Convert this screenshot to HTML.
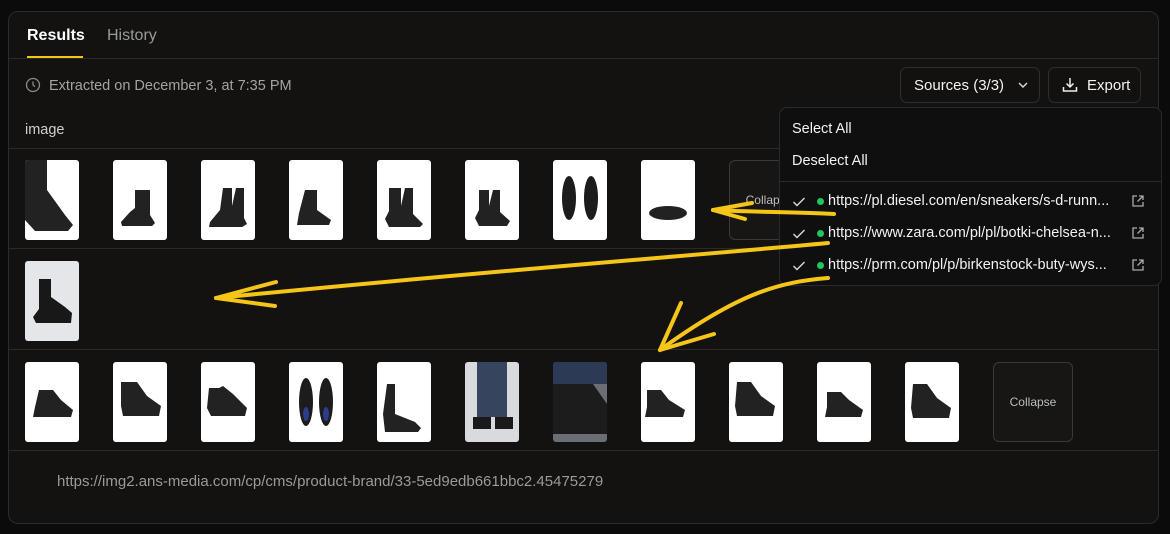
<!DOCTYPE html>
<html><head><meta charset="utf-8"><style>
*{box-sizing:border-box;margin:0;padding:0}
body{width:1170px;height:534px;background:#0b0b0b;font-family:"Liberation Sans",sans-serif;position:relative;overflow:hidden;color:#e8e8e8}
.panel{position:absolute;left:8px;top:11px;width:1151px;height:513px;background:#131211;border:1px solid #2c2b2a;border-radius:10px}
.abs{position:absolute}
.hl{position:absolute;left:9px;width:1149px;height:1px;background:#2a2928}
.th{position:absolute;width:54px;height:80px;background:#fff;border-radius:3px;overflow:hidden}
.coll{position:absolute;width:80px;height:80px;border:1px solid #3a3938;border-radius:6px;background:#171615;color:#bdbdbd;font-size:12px;display:flex;align-items:center;justify-content:center}
.btn{position:absolute;top:67px;height:36px;border:1px solid #2f2e2d;border-radius:7px;background:#121110;color:#f2f2f2;font-size:15px;display:flex;align-items:center}
.dd{position:absolute;left:779px;top:107px;width:383px;height:179px;background:#0f0f0f;border:1px solid #2a2a2a;border-radius:8px}
.it{position:absolute;left:12px;font-size:14.5px;color:#f2f2f2}
.url{position:absolute;left:12px;width:358px;height:20px;font-size:14.5px;color:#f2f2f2}
.dot{display:block;width:7px;height:7px;border-radius:50%;background:#22c55e;position:absolute;left:25px;top:5px}
</style></head><body>
<div class="panel"></div>
<div class="abs" style="left:27px;top:27px;font-size:16px;font-weight:bold;color:#fff">Results</div>
<div class="abs" style="left:107px;top:27px;font-size:16px;color:#9a9a9a">History</div>
<div class="abs" style="left:27px;top:56px;width:56px;height:2px;background:#f5c518"></div>
<div class="hl" style="top:58px"></div>
<svg class="abs" style="left:25px;top:77px" width="16" height="16" viewBox="0 0 16 16"><circle cx="8" cy="8" r="6.5" fill="none" stroke="#8a8a8a" stroke-width="1.3"/><path d="M8 4.5V8l2 1.6" fill="none" stroke="#8a8a8a" stroke-width="1.3"/></svg>
<div class="abs" style="left:49px;top:78px;font-size:14.5px;color:#a3a3a3">Extracted on December 3, at 7:35 PM</div>
<div class="btn" style="left:900px;width:140px;padding-left:13px">Sources (3/3)<svg style="margin-left:13px" width="12" height="8" viewBox="0 0 12 8"><path d="M2 2l4 4 4-4" fill="none" stroke="#ddd" stroke-width="1.4"/></svg></div>
<div class="btn" style="left:1048px;width:93px;padding-left:12px"><svg width="18" height="18" viewBox="0 0 18 18" style="margin-right:8px"><path d="M9 2v9M5.5 7.5L9 11l3.5-3.5M2.5 11v4h13v-4" fill="none" stroke="#eee" stroke-width="1.5"/></svg>Export</div>
<div class="abs" style="left:25px;top:122px;font-size:14.5px;color:#cfcfcf">image</div>
<div class="hl" style="top:148px"></div>
<div class="hl" style="top:248px"></div>
<div class="hl" style="top:349px"></div>
<div class="hl" style="top:450px"></div>
<!-- row1 -->
<div class="th" style="left:25px;top:160px"><svg width="54" height="80"><path d="M0 0h22v30l18 25 8 10-5 6H10L0 60z" fill="#222"/></svg></div>
<div class="th" style="left:113px;top:160px"><svg width="54" height="80"><path d="M22 30h15v25l5 8-3 3H9l-1-4 9-10 5-4z" fill="#222"/></svg></div>
<div class="th" style="left:201px;top:160px"><svg width="54" height="80"><path d="M22 28h9v18l4-18h8v30l3 6-5 3H8l1-5 10-12z" fill="#222"/></svg></div>
<div class="th" style="left:289px;top:160px"><svg width="54" height="80"><path d="M16 30h12v20l14 10-2 5H8l2-12z" fill="#222"/></svg></div>
<div class="th" style="left:377px;top:160px"><svg width="54" height="80"><path d="M12 28h12v18l4-18h8v26l10 10-3 3H12l-4-8 4-8z" fill="#222"/></svg></div>
<div class="th" style="left:465px;top:160px"><svg width="54" height="80"><path d="M14 30h10v16l4-16h7v22l10 9-3 5H14l-4-8 4-8z" fill="#222"/></svg></div>
<div class="th" style="left:553px;top:160px"><svg width="54" height="80"><ellipse cx="16" cy="38" rx="7" ry="22" fill="#1c1c1c"/><ellipse cx="38" cy="38" rx="7" ry="22" fill="#1c1c1c"/></svg></div>
<div class="th" style="left:641px;top:160px"><svg width="54" height="80"><ellipse cx="27" cy="53" rx="19" ry="7" fill="#222"/></svg></div>
<div class="coll" style="left:729px;top:160px">Collapse</div>
<!-- row2 -->
<div class="th" style="left:25px;top:261px;background:#e4e6ea"><svg width="54" height="80"><path d="M14 18h12v18l14 10 7 6-1 10H11l-3-6 6-8z" fill="#181818"/></svg></div>
<!-- row3 -->
<div class="th" style="left:25px;top:362px"><svg width="54" height="80"><path d="M14 28h14l8 10 12 10-2 7H8l2-10z" fill="#222"/></svg></div>
<div class="th" style="left:113px;top:362px"><svg width="54" height="80"><path d="M8 20h16l10 14 14 10-2 10H10l-2-10z" fill="#222"/></svg></div>
<div class="th" style="left:201px;top:362px"><svg width="54" height="80"><path d="M8 26h10l4-2 10 8 14 14-2 8H10l-4-8z" fill="#222"/></svg></div>
<div class="th" style="left:289px;top:362px"><svg width="54" height="80"><ellipse cx="17" cy="40" rx="7" ry="24" fill="#1c1c1c"/><ellipse cx="37" cy="40" rx="7" ry="24" fill="#1c1c1c"/><ellipse cx="17" cy="52" rx="3" ry="7" fill="#2a3d8a"/><ellipse cx="37" cy="52" rx="3" ry="7" fill="#2a3d8a"/></svg></div>
<div class="th" style="left:377px;top:362px"><svg width="54" height="80"><path d="M10 22h8v30l20 8 6 6-3 4H8l-2-18z" fill="#222"/></svg></div>
<div class="th" style="left:465px;top:362px;background:#d8dadd"><svg width="54" height="80"><path d="M12 0h30v55H12z" fill="#36445e"/><path d="M8 55h18v12H8zM30 55h18v12H30z" fill="#1a1a1a"/></svg></div>
<div class="th" style="left:553px;top:362px;background:#6b6e74"><svg width="54" height="80"><path d="M0 0h54v22H0z" fill="#2c3a55"/><path d="M0 22h40l14 20v30H0z" fill="#1c1c1c"/></svg></div>
<div class="th" style="left:641px;top:362px"><svg width="54" height="80"><path d="M6 28h14l8 10 16 10-2 7H4l2-10z" fill="#222"/></svg></div>
<div class="th" style="left:729px;top:362px"><svg width="54" height="80"><path d="M8 20h14l10 14 14 10-2 10H8l-2-10z" fill="#222"/></svg></div>
<div class="th" style="left:817px;top:362px"><svg width="54" height="80"><path d="M10 30h14l8 8 14 10-2 7H8l2-10z" fill="#222"/></svg></div>
<div class="th" style="left:905px;top:362px"><svg width="54" height="80"><path d="M8 22h14l10 14 14 10-2 10H8l-2-10z" fill="#222"/></svg></div>
<div class="coll" style="left:993px;top:362px">Collapse</div>
<div class="abs" style="left:57px;top:473px;font-size:15px;color:#9a9a9a">https://img2.ans-media.com/cp/cms/product-brand/33-5ed9edb661bbc2.45475279</div>
<!-- dropdown -->
<div class="dd">
<div class="it" style="top:13px">Select All</div>
<div class="it" style="top:45px">Deselect All</div>
<div class="abs" style="left:0;top:73px;width:381px;height:1px;background:#2a2a2a"></div>
<div class="url" style="top:85px"><svg class="abs" style="left:0;top:3px" width="14" height="12"><path d="M1.5 6l3.5 3.5 7.5-7.5" fill="none" stroke="#ddd" stroke-width="1.4"/></svg><span class="dot"></span><span class="abs" style="left:36px;top:0">https://pl.diesel.com/en/sneakers/s-d-runn...</span><svg class="abs" style="left:339px;top:1px" width="14" height="14"><path d="M6 2H2v10h10V8M8 2h4v4M12 2L6.5 7.5" fill="none" stroke="#aaa" stroke-width="1.3"/></svg></div>
<div class="url" style="top:117px"><svg class="abs" style="left:0;top:3px" width="14" height="12"><path d="M1.5 6l3.5 3.5 7.5-7.5" fill="none" stroke="#ddd" stroke-width="1.4"/></svg><span class="dot"></span><span class="abs" style="left:36px;top:0">https://www.zara.com/pl/pl/botki-chelsea-n...</span><svg class="abs" style="left:339px;top:1px" width="14" height="14"><path d="M6 2H2v10h10V8M8 2h4v4M12 2L6.5 7.5" fill="none" stroke="#aaa" stroke-width="1.3"/></svg></div>
<div class="url" style="top:149px"><svg class="abs" style="left:0;top:3px" width="14" height="12"><path d="M1.5 6l3.5 3.5 7.5-7.5" fill="none" stroke="#ddd" stroke-width="1.4"/></svg><span class="dot"></span><span class="abs" style="left:36px;top:0">https://prm.com/pl/p/birkenstock-buty-wys...</span><svg class="abs" style="left:339px;top:1px" width="14" height="14"><path d="M6 2H2v10h10V8M8 2h4v4M12 2L6.5 7.5" fill="none" stroke="#aaa" stroke-width="1.3"/></svg></div>
</div>
<svg class="abs" style="left:0;top:0" width="1170" height="534">
<g fill="none" stroke="#f5c518" stroke-linecap="round" stroke-width="4">
<path d="M834 214C800 212 750 212 713 210"/>
<path d="M713 210L752 203M713 210L745 219"/>
<path d="M828 243C700 255 500 270 216 298"/>
<path d="M216 298L276 282M216 298L275 306"/>
<path d="M828 278C780 282 740 292 660 350"/>
<path d="M660 350L681 303M660 350L714 334"/>
</g></svg>
</body></html>
